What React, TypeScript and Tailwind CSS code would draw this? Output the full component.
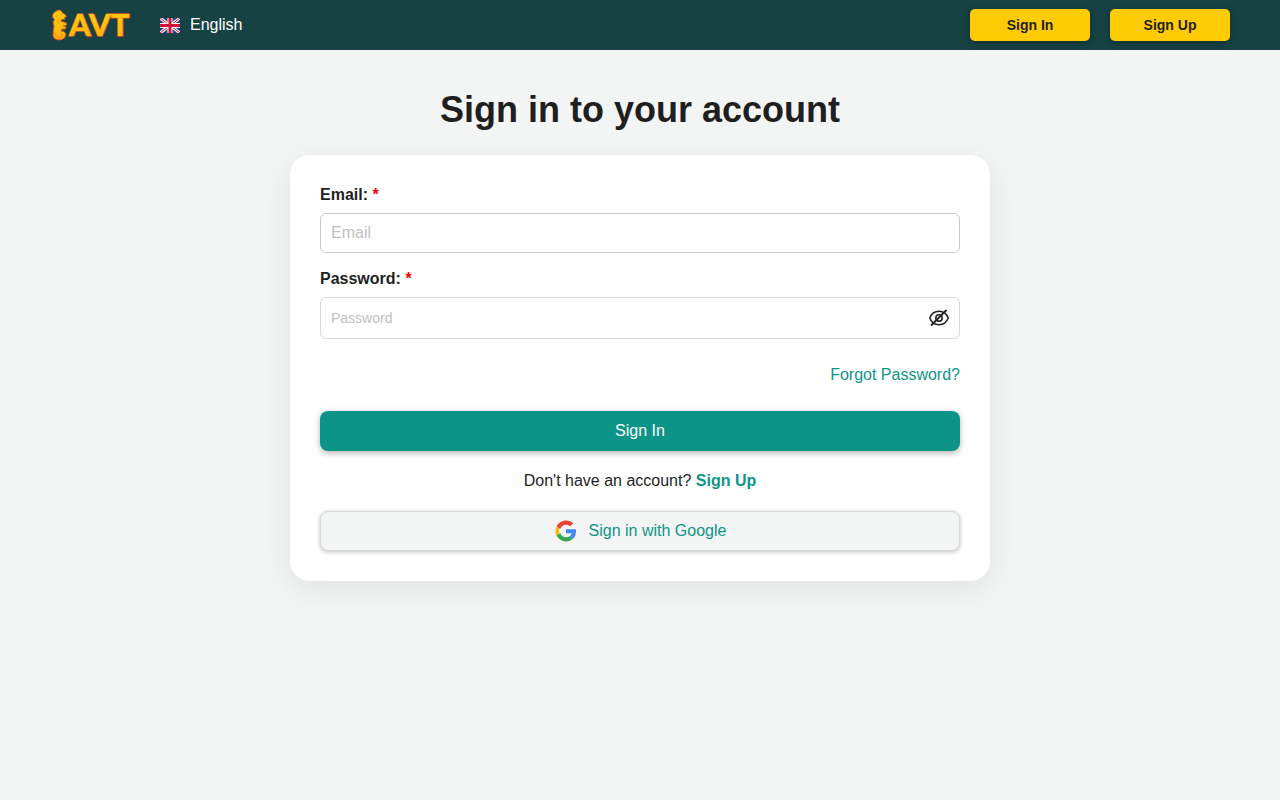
import React, { useState } from 'react';

// ── Logo ──
const Logo = () => (
  <svg viewBox="0 -8 84 50" className="w-[84px] h-[50px]" role="img" aria-label="AVT">
    <defs>
      <linearGradient id="gold" x1="0" y1="0" x2="0" y2="1">
        <stop offset="0" stopColor="#ffd012" />
        <stop offset="1" stopColor="#ffb00c" />
      </linearGradient>
    </defs>
    {/* Merlion */}
    <g strokeLinejoin="round" strokeLinecap="round">
      <path
        d="M5 4 L8 2 L11 2.500 L12 4.500 L15 6.500 L16.500 8.500 L14.500 9.500 L15 11 L11.500 11.500 L11 13.500 L14 14 L17 15.500 L16 17.500 L13 17.500 L16 19 L15.500 21 L12 21 L11 23 L14 23.500 L16 26 L15 29.500 L12 31.500 L8 32 L4.500 30.500 L3 27.500 L3.500 22 L4 18 L3 14 L4.500 11.500 L2.500 9 L3 6 Z"
        fill="url(#gold)"
        stroke="#d9581c"
        strokeWidth="0.9"
      />
      <path
        d="M6 6 L8 8 L6 10 M10.500 6 L12 6.500 M9 10 L7 13 L8.500 15.500 M5.500 25 L6 28.500 L9 30 L12.500 28.500 L12.500 26 L10 25.500"
        fill="none"
        stroke="#ee8412"
        strokeWidth="0.8"
      />
    </g>
    <text
      x="19"
      y="28"
      fill="url(#gold)"
      stroke="#dc561c"
      strokeWidth="1.4"
      strokeLinejoin="round"
      paintOrder="stroke"
      className="font-['Lato'] text-[31px] font-black"
    >
      AVT
    </text>
  </svg>
);

// ── Flag ──
const UkFlag = () => (
  <svg viewBox="0 0 60 45" className="w-5 h-[15px]" aria-hidden="true">
    <path d="M0 0h60v45H0z" fill="#2a3f80" />
    <path d="M0 0l60 45M60 0L0 45" stroke="#fff" strokeWidth="9" />
    <path d="M0 0l60 45M60 0L0 45" stroke="#d3123a" strokeWidth="3" />
    <path d="M30 0v45M0 22.500h60" stroke="#fff" strokeWidth="15" />
    <path d="M30 0v45M0 22.500h60" stroke="#d3123a" strokeWidth="9" />
  </svg>
);

const GoogleIcon = () => (
  <svg viewBox="0 0 48 48" className="w-6 h-6" aria-hidden="true">
    <path fill="#FBBC05" d="M10.530 28.590c-.480-1.450-.760-2.990-.760-4.590s.270-3.140.760-4.590l-6-4.650C3.560 17.540 2.800 20.690 2.800 24s.760 6.460 2 9.300z" />
    <path fill="#EA4335" d="M24 11.300c3.300 0 6.200 1.200 8.500 3.300l6-6C34.800 5.300 29.800 3.200 24 3.200c-8.200 0-15.300 4.700-18.700 11.600l7 5.300C14 15 18.500 11.300 24 11.300z" />
    <path fill="#34A853" d="M24 44.800c5.600 0 10.400-1.900 13.900-5.100l-6.700-5.200c-1.900 1.300-4.300 2-7.200 2-5.500 0-10.100-3.600-11.700-8.600l-7 5.300C8.700 40.100 15.800 44.800 24 44.800z" />
    <path fill="#4285F4" d="M44 24.500c0-1.500-.100-2.700-.400-4H24v8h11.400c-.500 2.600-2 4.700-4.200 6.100l6.700 5.200C41.900 36.200 44 30.900 44 24.500z" />
  </svg>
);

const EyeIcon = ({ crossed }: { crossed: boolean }) => (
  <svg viewBox="0 0 24 24" className="w-6 h-6" fill="none" stroke="currentColor" strokeWidth="1.500" aria-hidden="true">
    <path d="M2.800 12C4.500 7.500 8 5.300 12 5.300S19.500 7.500 21.200 12C19.500 16.500 16 18.700 12 18.700S4.500 16.500 2.800 12Z" />
    <circle cx="12" cy="12" r="3.200" />
    {crossed && <path d="M4 19.500L19.500 4" strokeWidth="1.800" />}
  </svg>
);

const FieldLabel = ({ htmlFor, children }: { htmlFor: string; children: React.ReactNode }) => (
  <label htmlFor={htmlFor} className="block mb-2 leading-5 font-bold">
    {children} <span className="text-[#ff0000]">*</span>
  </label>
);

const HeaderButton = ({ children }: { children: React.ReactNode }) => (
  <button
    type="button"
    className="w-[120px] h-8 rounded-[5px] bg-[#ffcb05] text-sm font-bold text-[#1f1f1f] shadow-[0_2px_6px_rgba(0,0,0,0.3)]"
  >
    {children}
  </button>
);

const App: React.FC = () => {
  const [showPassword, setShowPassword] = useState(false);

  return (
    <div className="min-h-screen bg-[#f3f5f5] font-['Liberation_Sans',Arial,sans-serif] text-base text-[#1f1f1f]">
      {/* ── Header ── */}
      <header className="flex items-center justify-between h-[50px] px-[50px] bg-[#164244]">
        <div className="flex items-center gap-[26px]">
          <a href="#home">
            <Logo />
          </a>
          <button type="button" className="flex items-center gap-2.5 text-white">
            <UkFlag />
            English
          </button>
        </div>
        <nav className="flex gap-5">
          <HeaderButton>Sign In</HeaderButton>
          <HeaderButton>Sign Up</HeaderButton>
        </nav>
      </header>

      {/* ── Sign in form ── */}
      <main className="flex flex-col items-center pt-10">
        <h1 className="mb-[25px] text-4xl font-bold">Sign in to your account</h1>
        <form
          className="w-full max-w-[700px] p-[30px] rounded-[20px] bg-white shadow-[0_8px_30px_rgba(0,0,0,0.08)]"
          onSubmit={(e) => e.preventDefault()}
        >
          <FieldLabel htmlFor="email">Email:</FieldLabel>
          <input
            id="email"
            type="email"
            placeholder="Email"
            className="block w-full h-10 mb-4 px-2.5 rounded-md border border-[#c8c8c8] placeholder:text-[#bfbfbf]"
          />

          <FieldLabel htmlFor="password">Password:</FieldLabel>
          <div className="flex items-center h-[42px] px-2.5 rounded-md border border-[#d9d9d9]">
            <input
              id="password"
              type={showPassword ? 'text' : 'password'}
              placeholder="Password"
              className="flex-1 text-sm outline-none placeholder:text-[#bfbfbf]"
            />
            <button
              type="button"
              aria-label="Toggle password visibility"
              className="-mr-0.5"
              onClick={() => setShowPassword(!showPassword)}
            >
              <EyeIcon crossed={!showPassword} />
            </button>
          </div>

          <div className="flex justify-end my-6">
            <a href="#forgot" className="text-[#0d9488]">
              Forgot Password?
            </a>
          </div>

          <button
            type="submit"
            className="w-full h-10 rounded-lg bg-[#0d9488] text-white shadow-[0_2px_6px_rgba(0,0,0,0.3)]"
          >
            Sign In
          </button>

          <p className="my-[18px] text-center">
            Don't have an account?{' '}
            <a href="#signup" className="font-bold text-[#0d9488]">
              Sign Up
            </a>
          </p>

          <button
            type="button"
            className="flex items-center justify-center gap-[11px] w-full h-10 rounded-lg border border-[#d9d9d9] bg-[#f3f5f5] text-[#0d9488] shadow-[0_1px_4px_rgba(0,0,0,0.25)]"
          >
            <GoogleIcon />
            Sign in with Google
          </button>
        </form>
      </main>
    </div>
  );
};

export default App;
